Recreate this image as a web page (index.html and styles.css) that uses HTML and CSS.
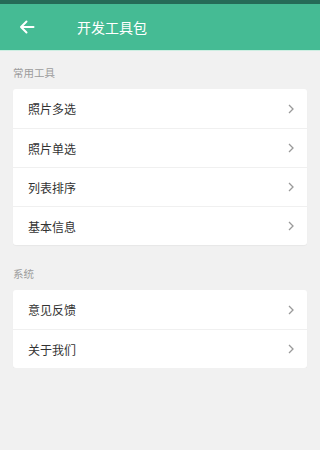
FILE: index.html
```html
<!DOCTYPE html>
<html lang="zh">
<head>
<meta charset="utf-8">
<link rel="stylesheet" href="styles.css">
</head>
<body>
<div class="statusbar"></div>
<header class="appbar">
  <svg class="back" width="16" height="14" viewBox="0 0 16 14" fill="none" stroke="#fff" stroke-width="2" stroke-linecap="round" stroke-linejoin="round">
    <path d="M14.5 7H2M7.5 1.5L2 7l5.5 5.5"/>
  </svg>
  <div class="title">开发工具包</div>
</header>
<div class="divider"></div>

<div class="section-label first">常用工具</div>
<div class="card">
  <div class="row"><span>照片多选</span><svg class="chev" width="6" height="10" viewBox="0 0 6 10"><path d="M1 1l4 4-4 4" fill="none" stroke="#9a9a9a" stroke-width="1.3"/></svg></div>
  <div class="row"><span>照片单选</span><svg class="chev" width="6" height="10" viewBox="0 0 6 10"><path d="M1 1l4 4-4 4" fill="none" stroke="#9a9a9a" stroke-width="1.3"/></svg></div>
  <div class="row"><span>列表排序</span><svg class="chev" width="6" height="10" viewBox="0 0 6 10"><path d="M1 1l4 4-4 4" fill="none" stroke="#9a9a9a" stroke-width="1.3"/></svg></div>
  <div class="row"><span>基本信息</span><svg class="chev" width="6" height="10" viewBox="0 0 6 10"><path d="M1 1l4 4-4 4" fill="none" stroke="#9a9a9a" stroke-width="1.3"/></svg></div>
</div>

<div class="section-label">系统</div>
<div class="card">
  <div class="row"><span>意见反馈</span><svg class="chev" width="6" height="10" viewBox="0 0 6 10"><path d="M1 1l4 4-4 4" fill="none" stroke="#9a9a9a" stroke-width="1.3"/></svg></div>
  <div class="row"><span>关于我们</span><svg class="chev" width="6" height="10" viewBox="0 0 6 10"><path d="M1 1l4 4-4 4" fill="none" stroke="#9a9a9a" stroke-width="1.3"/></svg></div>
</div>
</body>
</html>
```
FILE: styles.css
```css
html {
  background: #f1f1f1;
}
html, body {
  margin: 0;
  padding: 0;
}
body {
  font-family: "Noto Sans CJK SC", "Noto Sans", sans-serif;
  overflow: hidden;
}
.statusbar {
  height: 4px;
  background: #256b57;
}
.appbar {
  height: 46px;
  background: #45bb94;
  display: flex;
  align-items: center;
}
.back {
  margin-left: 19px;
  display: block;
}
.title {
  margin-left: 42px;
  color: #fff;
  font-size: 14px;
  line-height: 20px;
}
.divider {
  height: 1px;
  background: #cdeee2;
}
.section-label {
  color: #9c9c9c;
  font-size: 10.5px;
  line-height: 16px;
  padding: 0 13px;
  margin: 21px 0 8px;
}
.section-label.first {
  margin-top: 14px;
}
.card {
  margin: 0 13px;
  background: #fff;
  border-radius: 3px;
  box-shadow: 0 1px 1px rgba(0,0,0,0.04);
}
.row {
  height: 39px;
  display: flex;
  align-items: center;
  justify-content: space-between;
  padding: 0 13px 0 15px;
  font-size: 12px;
  color: #333;
  border-top: 1px solid #f0f0f0;
  box-sizing: border-box;
}
.row:first-child {
  border-top: none;
}
.chev {
  display: block;
}
```
